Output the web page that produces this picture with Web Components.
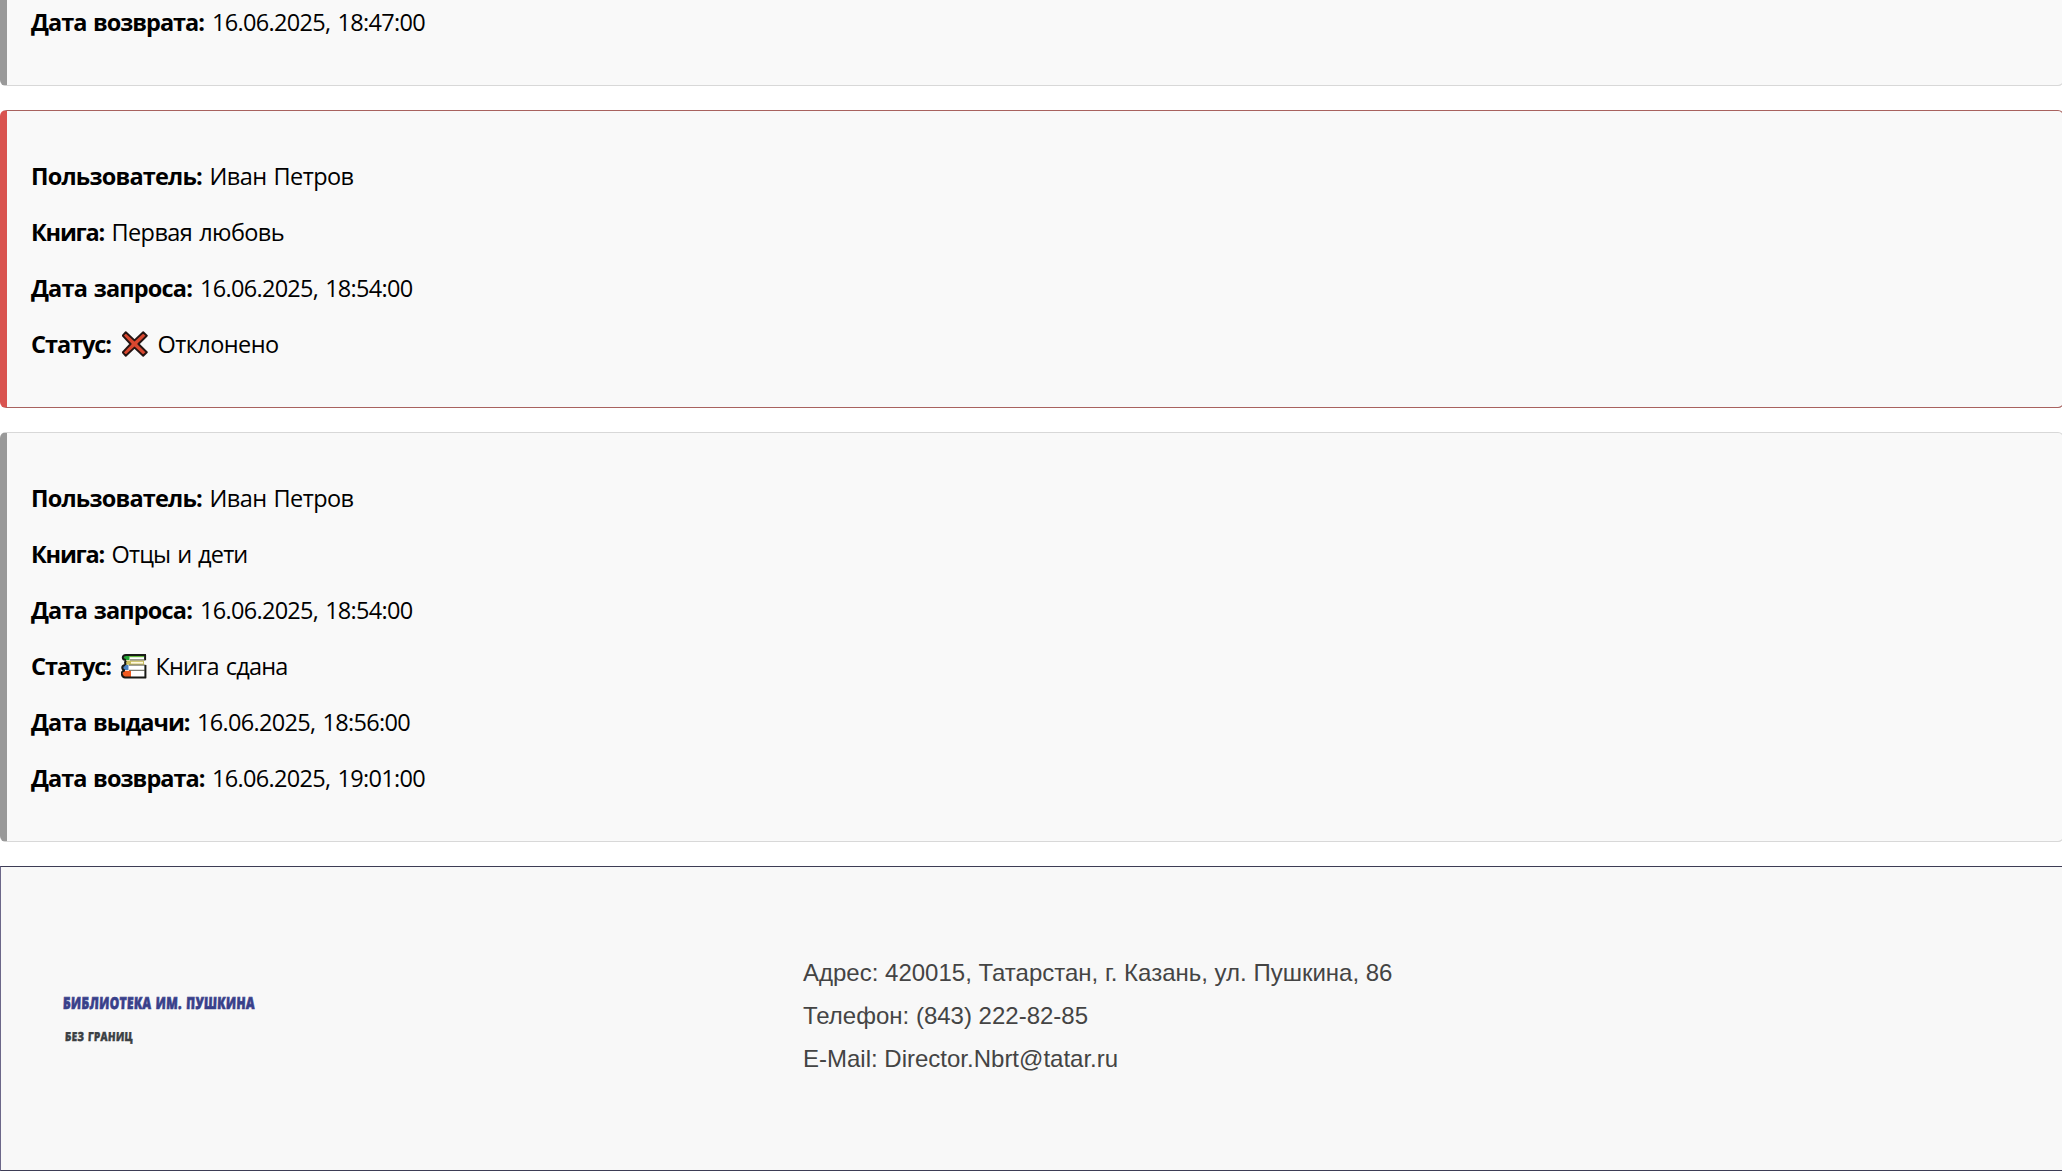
<!DOCTYPE html>
<html lang="ru"><head><meta charset="utf-8"><title>Библиотека им. Пушкина</title>
<style>html,body{margin:0;height:100%;overflow:hidden;background:#fff}</style></head><body>
<library-page></library-page>
<script>
const make=(el,html)=>{el.attachShadow({mode:'open'}).innerHTML=html};
// Text run fitted to the width given in pixels, by tracking or, with "squeeze", by condensing the letters.
customElements.define('fit-text',class extends HTMLElement{connectedCallback(){
 make(this,'<style>:host{display:inline-block;white-space:pre;flex:none}span{display:inline-block;transform-origin:0 50%}</style><span></span>');
 const s=this.shadowRoot.querySelector('span');s.textContent=this.getAttribute('text');
 const w=+this.getAttribute('w');
 if(!w)return;
 const natural=s.getBoundingClientRect().width;
 if(this.hasAttribute('squeeze'))s.style.transform=`scaleX(${w/natural}) skewX(-3deg)`;
 else s.style.letterSpacing=((w-natural)/s.textContent.length)+'px';
 this.style.width=w+'px';
}});
customElements.define('status-icon',class extends HTMLElement{connectedCallback(){
 const cross='<path d="M3.8 1.2 12.5 9.4 21.2 1.2 24.8 4.7 16.4 13 24.8 21.3 21.2 24.8 12.5 16.6 3.8 24.8 .7 21.3 8.6 13 .7 4.7Z" fill="#d9472f" stroke="#251412" stroke-width="1.9" stroke-linejoin="round"/>';
 const books='<path d="M4 2H24V7.5L23 8V12H24.5V24.5H4Q0 24 1 20L3 17.5Q0 15 2 12.5L4 11.5V7Q0 5 4 2Z" fill="#fff"/><path d="M4 2.5H8.5V7H4Q.5 5 4 2.5Z" fill="#26a637"/><path d="M8 2.5H23V4.2H8Z" fill="#66b83d"/><path d="M4.5 7.5H23V11.8H5Q3.3 10 4.5 7.5Z" fill="#c9bd5c"/><path d="M10 8.8H22V10.6H10Z" fill="#fff8e0"/><path d="M3 12H7.5V17H3Q0 14.5 3 12Z" fill="#4a83c5"/><path d="M3 17.8H10V24H3Q0 21 3 17.8Z" fill="#f05a20"/><path d="M25 1.9H5Q1.8 2 1.8 4.6 2 7 5 7M24.1 2V7.2M5 7.4Q3.3 9.7 4.8 12M4 12Q1 12.5 1.3 15 1.7 17.3 4 17.5M24.4 12V17.5M3.5 17.6Q0 18.5.9 21.5 1.5 24.4 4 24.4H25.2M24.4 17.5V25" fill="none" stroke="#171916" stroke-width="2"/><path d="M9 6.9H24M8 12.1H24.5M8 17.3H24" fill="none" stroke="#4b4b3c" stroke-width=".9"/>';
 make(this,'<style>:host{display:block;flex:none;width:26px;height:26px}svg{display:block}</style><svg width="26" height="26" viewBox="0 0 26 26">'+(this.getAttribute('kind')==='cross'?cross:books)+'</svg>');
}});
customElements.define('info-row',class extends HTMLElement{connectedCallback(){
 const a=n=>this.getAttribute(n),icon=a('icon');
 make(this,`<style>:host{display:flex;align-items:center;height:32px;margin:24px 0;font:23.5px/32px "Open Sans","Noto Sans",sans-serif;color:#000;word-spacing:1.5px}.l{font-weight:700;width:${a('at')-31}px;flex:none}status-icon{margin-right:${a('gap')||0}px}</style><span class="l"><fit-text text="${a('label')}" w="${a('lw')-2}"></fit-text></span>${icon?`<status-icon kind="${icon}"></status-icon>`:''}<fit-text text="${a('value')}" w="${a('vw')}"></fit-text>`);
}});
customElements.define('request-card',class extends HTMLElement{connectedCallback(){
 make(this,`<style>:host{display:block;flex:none;box-sizing:border-box;margin:0 -2px 24px 0;padding:25px 24px 23px;border:1px solid #d8d8d8;border-left:7px solid #999;border-radius:6px;background:#f9f9f9}:host([tone=rejected]){border-color:#a8625f;border-left-color:#d9534f}</style><slot></slot>`);
}});
customElements.define('site-footer',class extends HTMLElement{connectedCallback(){
 make(this,`<style>:host{display:flex;flex:none;box-sizing:border-box;height:305px;align-items:center;margin-right:-2px;border:1px solid #3d3c55;border-left-color:#6c6789;background:#f8f8f8}
 .logo{width:740px;flex:none;padding-left:62px;box-sizing:border-box;display:flex;flex-direction:column;gap:14px;font-family:"Open Sans",sans-serif;font-weight:800;margin-top:3px}
 .a{font-size:16.5px;line-height:20px;color:#38408a;word-spacing:1px;letter-spacing:.5px;-webkit-text-stroke:.7px #38408a}.b{font-size:12.5px;line-height:20px;color:#3b4044;padding-left:1.5px;word-spacing:1px;letter-spacing:.3px;-webkit-text-stroke:.4px #3b4044}
 .c{padding-left:62px;box-sizing:border-box;font:24px/43px "Liberation Sans",Arial,sans-serif;color:#444;display:flex;flex-direction:column;margin-top:-6px}</style>
 <div class="logo"><fit-text class="a" squeeze text="БИБЛИОТЕКА ИМ. ПУШКИНА" w="192"></fit-text><fit-text class="b" squeeze text="БЕЗ ГРАНИЦ" w="68"></fit-text></div>
 <div class="c"><fit-text text="Адрес: 420015, Татарстан, г. Казань, ул. Пушкина, 86"></fit-text><fit-text text="Телефон: (843) 222-82-85"></fit-text><fit-text text="E-Mail: Director.Nbrt@tatar.ru"></fit-text></div>`);
}});
customElements.define('library-page',class extends HTMLElement{connectedCallback(){
 const user='<info-row label="Пользователь:" lw="173" at="209.5" value="Иван Петров" vw="144"></info-row>';
 const asked='<info-row label="Дата запроса:" lw="163" at="200" value="16.06.2025, 18:54:00" vw="212.5"></info-row>';
 make(this,`<style>:host{display:flex;flex-direction:column;height:1172px;overflow:hidden}.first{margin-top:-20px}.first info-row{margin-top:0}</style>
 <request-card class="first"><info-row label="Дата возврата:" lw="175" at="212" value="16.06.2025, 18:47:00" vw="213"></info-row></request-card>
 <request-card tone="rejected">${user}<info-row label="Книга:" lw="75" at="111.5" value="Первая любовь" vw="172.5"></info-row>${asked}<info-row label="Статус:" lw="82" at="122" icon="cross" gap="9.5" value="Отклонено" vw="121"></info-row></request-card>
 <request-card>${user}<info-row label="Книга:" lw="75" at="111.5" value="Отцы и дети" vw="136"></info-row>${asked}<info-row label="Статус:" lw="82" at="121" icon="books" gap="8.5" value="Книга сдана" vw="132"></info-row><info-row label="Дата выдачи:" lw="160.5" at="197" value="16.06.2025, 18:56:00" vw="213"></info-row><info-row label="Дата возврата:" lw="175.5" at="212" value="16.06.2025, 19:01:00" vw="213"></info-row></request-card>
 <site-footer></site-footer>`);
}});
</script></body></html>
